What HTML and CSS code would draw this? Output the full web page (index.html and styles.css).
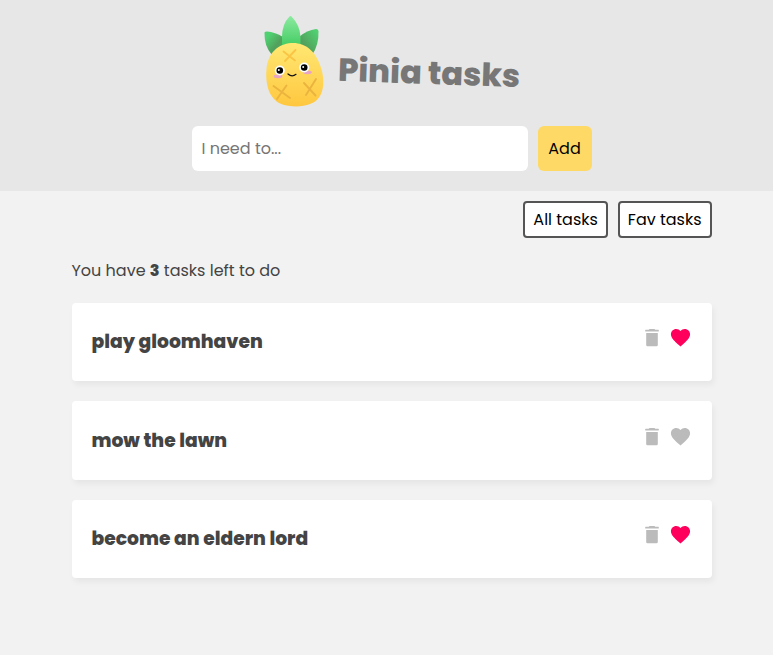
FILE: index.html
```html
<!DOCTYPE html>
<html lang="en">
<head>
<meta charset="utf-8">
<title>Pinia tasks</title>
<link rel="stylesheet" href="styles.css">
</head>
<body>
<svg class="defs" width="0" height="0" aria-hidden="true">
  <symbol id="trash" viewBox="0 0 24 24"><path d="M7.500 20.300Q6.200 20.300 6.200 19V7H17.800V19Q17.800 20.300 16.500 20.300ZM5.600 5.500Q5.200 5.500 5.200 5V4.300Q5.200 3.800 5.700 3.800H8.700L9.600 3H14.400L15.300 3.800H18.300Q18.800 3.800 18.800 4.300V5Q18.800 5.500 18.400 5.500Z"/></symbol>
  <symbol id="heart" viewBox="0 0 24 24"><path d="M12 21.350l-1.450-1.320C5.400 15.360 2 12.280 2 8.500 2 5.420 4.420 3 7.500 3c1.740 0 3.410.81 4.500 2.090C13.090 3.810 14.760 3 16.500 3 19.580 3 22 5.420 22 8.500c0 3.780-3.400 6.860-8.550 11.540L12 21.350z"/></symbol>
</svg>
<header class="header">
  <div class="brand">
    <svg class="logo" viewBox="0 0 80 105">
      <defs>
        <linearGradient id="body" x1="0" y1="0" x2="0" y2="1"><stop offset="0" stop-color="#ffe873"/><stop offset="1" stop-color="#ffc73f"/></linearGradient>
        <linearGradient id="leaf" x1="0" y1="0" x2="0" y2="1"><stop offset="0" stop-color="#8ceaa0"/><stop offset="1" stop-color="#43cc63"/></linearGradient>
        <linearGradient id="left" x1="0" y1="0" x2="1" y2="1"><stop offset=".2" stop-color="#4fd071"/><stop offset=".6" stop-color="#52a05c"/><stop offset="1" stop-color="#48b463"/></linearGradient>
        <linearGradient id="right" x1="1" y1="0" x2="0" y2="1"><stop offset=".1" stop-color="#50d071"/><stop offset=".65" stop-color="#52a05c"/><stop offset="1" stop-color="#48a45b"/></linearGradient>
      </defs>
      <path fill="url(#left)" d="M9.500 24.500Q10 23.500 12 23.500Q20 24 28 29L29 39L17 47Q9 38 9.500 24.500Z"/>
      <path fill="url(#right)" d="M44 29Q52 22 61 21Q63 21 63.500 23Q64 37 57 47L43 39Z"/>
      <path fill="url(#leaf)" d="M34.500 8.500Q35.500 7.500 36.500 8.500Q45 17 45.500 29V38H27V29Q27 16 34.500 8.500Z"/>
      <path fill="url(#body)" d="M36 35C50 34 62 43 67 63C71 82 65 93 55 96C48 99 37 99 29 97C15 93 10 78 11.500 61C13 45 23 36 36 35Z"/>
      <g fill="none" stroke-width="1.900" stroke-linecap="round"><path stroke="#fac545" d="M28.500 43.500L40 52.500M40.500 42L30 53"/><path stroke="#ebb43e" d="M18.500 78L35 90M31.500 77.500L22 91M49 75L60.500 87.500M61 71L51 87"/></g>
      <ellipse cx="23" cy="68.300" rx="4.400" ry="1.900" fill="#e9a5c4"/><ellipse cx="52.500" cy="64.300" rx="4.400" ry="1.900" fill="#e9a5c4"/>
      <circle cx="24.800" cy="62.500" r="5" fill="#fff"/><circle cx="49.200" cy="59.500" r="5" fill="#fff"/>
      <circle cx="24.800" cy="62.500" r="3.300"/><circle cx="49.200" cy="59.500" r="3.300"/>
      <circle cx="23.800" cy="61.900" r="1" fill="#fff"/><circle cx="48.200" cy="58.900" r="1" fill="#fff"/>
      <path d="M33 66Q37 69.500 41 66.300" fill="none" stroke="#111" stroke-width="1.200" stroke-linecap="round"/>
    </svg>
    <h1 class="title">Pinia tasks</h1>
  </div>
  <form class="new-task">
    <input class="field" type="text" placeholder="I need to...">
    <button class="add" type="button">Add</button>
  </form>
</header>
<main class="content">
  <nav class="filters"><button class="filter all" type="button">All tasks</button><button class="filter fav" type="button">Fav tasks</button></nav>
  <p class="count">You have <b>3</b> tasks left to do</p>
  <section class="tasks">
    <article class="task"><h3 class="name">play gloomhaven</h3><div class="icons"><svg class="icon"><use href="#trash"/></svg><svg class="icon heart on"><use href="#heart"/></svg></div></article>
    <article class="task"><h3 class="name">mow the lawn</h3><div class="icons"><svg class="icon"><use href="#trash"/></svg><svg class="icon heart"><use href="#heart"/></svg></div></article>
    <article class="task"><h3 class="name">become an eldern lord</h3><div class="icons"><svg class="icon"><use href="#trash"/></svg><svg class="icon heart on"><use href="#heart"/></svg></div></article>
  </section>
</main>
</body>
</html>
```
FILE: styles.css
```css
* { box-sizing: border-box; }
body { margin: 0; min-height: 655px; background: #f2f2f2; color: #444; font: 16px/24px Poppins, Inter, "Open Sans", sans-serif; font-feature-settings: "cv11"; overflow: hidden; }
button, input { font: inherit; font-feature-settings: inherit; letter-spacing: inherit; }
b { font-weight: 800; }
.defs { display: block; height: 0; }
.header { height: 191px; padding: 8px 0 0 10px; background: #e7e7e7; }
.brand { display: flex; width: 530px; margin-left: 245px; }
.logo { width: 80px; height: 105px; }
.title { margin: 41px 0 0 2.500px; height: 48px; font-size: 32px; line-height: 48px; font-weight: 800; color: #777; white-space: nowrap; transform: rotate(2deg); }
.new-task { display: flex; gap: 10px; width: 400px; margin: 13px auto 0; }
.field { width: 336px; height: 45px; padding: 10px; border: 0; border-radius: 6px; background: #fff; }
.field::placeholder { color: #757575; opacity: 1; }
.add { width: 54px; height: 45px; padding: 0; border: 0; border-radius: 6px; background: #ffd966; color: #000; }
.content { width: 640px; margin-left: 71.500px; }
.filters { display: flex; justify-content: flex-end; gap: 10px; padding-top: 10px; }
.filter { height: 37px; padding: 0; border: 2px solid #555; border-radius: 4px; background: #fff; color: #000; white-space: nowrap; }
.all { width: 84.400px; padding-left: .6px; }
.fav { width: 94px; padding-left: .4px; }
.count { margin: 21px 0 19.600px; }
.tasks { display: grid; gap: 20px; }
.task { display: flex; justify-content: space-between; height: 78.500px; padding: 20px; border-radius: 4px; background: #fff; box-shadow: 2px 4px 6px rgba(0,0,0,.05); }
.name { margin: 5.600px 0 0; font-size: 18.720px; line-height: 28px; font-weight: 800; white-space: nowrap; }
.icons { display: flex; gap: 4px; margin-right: -.5px; padding-top: 3.600px; }
.icon { width: 24px; height: 24px; fill: #bbb; }
.heart { padding: 0 0 1px 1px; }
.icon.on { fill: #ff005d; }
```
